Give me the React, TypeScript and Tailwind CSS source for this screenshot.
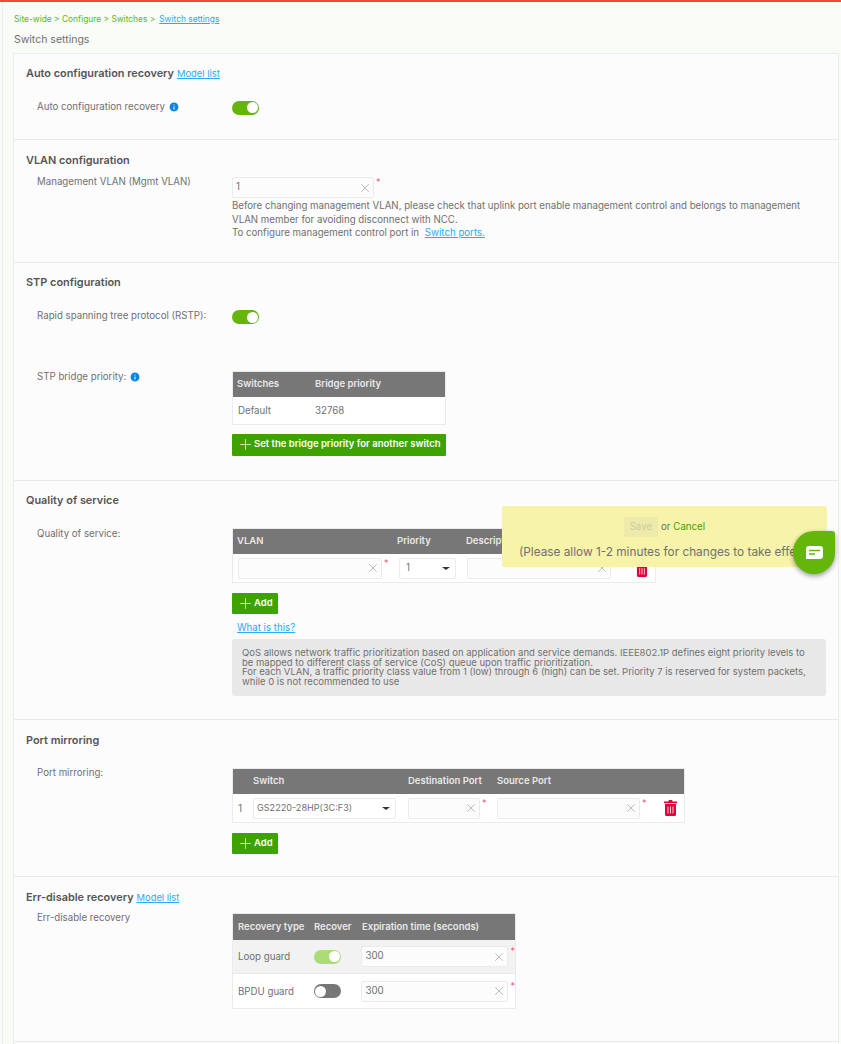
import { Plus, X, Info } from "lucide-react";

const Toggle = ({ on = true, faded = false }: { on?: boolean; faded?: boolean }) => (
  <div
    className={`flex h-[14px] w-[27px] items-center rounded-full px-[1px] ${
      on ? (faded ? "justify-end bg-[#acdc78]" : "justify-end bg-[#64b70a]") : "justify-start bg-[#777777]"
    }`}
  >
    <div className="h-[11px] w-[11px] rounded-full bg-white" />
  </div>
);

const TextInput = ({ value, className, star = true }: { value?: string; className: string; star?: boolean }) => (
  <div className="flex items-start">
    <div
      className={`flex h-[21px] items-center justify-between rounded-[2px] border border-[#ebebeb] bg-[#fcfcfc] pl-[3px] pr-[1px] text-[9.7px] text-[#707070] ${className}`}
    >
      <span>{value}</span>
      <X className="h-[14px] w-[14px] text-[#a0a0a0]" strokeWidth={1.2} />
    </div>
    {star && <span className="ml-[2px] text-[9px] leading-[10px] text-[#f0506e]">*</span>}
  </div>
);

const SelectBox = ({ value, className }: { value: string; className: string }) => (
  <div
    className={`flex h-[21px] items-center justify-between rounded-[2px] border border-[#ebebeb] bg-white pl-[3px] pr-[5px] text-[#707070] ${className}`}
  >
    <span>{value}</span>
    <div className="h-0 w-0 border-x-[4px] border-t-[3px] border-x-transparent border-t-[#333333]" />
  </div>
);

const AddButton = ({ label, className }: { label: string; className: string }) => (
  <div
    className={`flex items-center rounded-[1px] bg-[#3ea300] pl-[5px] text-[9.5px] font-semibold text-white ${className}`}
  >
    <Plus className="h-[17px] w-[17px]" strokeWidth={1} />
    <span>{label}</span>
  </div>
);

const Link = ({ children, className = "" }: { children: React.ReactNode; className?: string }) => (
  <span className={`text-[#29abf5] underline ${className}`}>{children}</span>
);

const Section = ({ className, children }: { className: string; children: React.ReactNode }) => (
  <section className={`relative border-b border-[#e9e9e9] pl-[12px] ${className}`}>{children}</section>
);

const Title = ({ children }: { children: React.ReactNode }) => (
  <h2 className="-mt-[1px] flex items-baseline gap-[3px] text-[10.9px] font-semibold leading-[14px] text-[#555555]">
    {children}
  </h2>
);

const Label = ({ children, className = "" }: { children: React.ReactNode; className?: string }) => (
  <div className={`flex w-[206px] shrink-0 items-center gap-[3px] pl-[11px] text-[9.7px] text-[#707070] ${className}`}>
    {children}
  </div>
);

const InfoDot = () => (
  <Info className="h-[12px] w-[12px] fill-[#0a84e0] text-white" strokeWidth={2.2} />
);

const HeadRow = ({ children, className = "" }: { children: React.ReactNode; className?: string }) => (
  <div className={`flex items-center bg-[#777777] text-[9.5px] font-semibold text-[#e9e9e9] ${className}`}>{children}</div>
);

// filled bin with lid, handle and three white slots
const TrashIcon = ({ className }: { className: string }) => (
  <svg viewBox="0 0 13 16" className={className}>
    <path d="M4.5 1.6V1a1 1 0 0 1 1-1h2a1 1 0 0 1 1 1v.6H13v1.6H0V1.6z" fill="#e2003c" />
    <path d="M1 4h11v10.5a1.5 1.5 0 0 1-1.5 1.5h-8A1.5 1.5 0 0 1 1 14.5z" fill="#e2003c" />
    <path d="M4 6.5v7M6.5 6.5v7M9 6.5v7" stroke="#fff" strokeWidth="0.8" />
  </svg>
);

export default function App() {
  return (
    <div className="relative h-[1044px] w-[841px] overflow-hidden bg-[#f8fbf6] font-['Inter',sans-serif]">
      <div className="h-[2px] bg-[#f0483e]" />
      <div className="ml-[2px] h-[1042px] border-l border-[#eeeeee] pl-[10px] pr-[2px]">
        {/* breadcrumb */}
        <div className="flex h-[31px] items-center gap-[3px] pl-[1px] pt-[3px] text-[8.4px] text-[#5cb82c]">
          <span>Site-wide &gt; Configure &gt; Switches &gt;</span>
          <span className="ml-[1px] text-[#29abf5] underline">Switch settings</span>
        </div>
        <div className="h-[20px] pl-[1px] text-[10.5px] leading-[14px] text-[#707070]">Switch settings</div>

        <div className="border border-[#ececec] bg-[#fcfcfc]">
          {/* Auto configuration recovery */}
          <Section className="h-[86px] pt-[13px]">
            <Title>
              Auto configuration recovery <Link className="text-[9.4px] font-normal">Model list</Link>
            </Title>
            <div className="mt-[19px] flex items-center">
              <Label className="pb-[1px]">
                Auto configuration recovery <InfoDot />
              </Label>
              <Toggle />
            </div>
          </Section>

          {/* VLAN configuration */}
          <Section className="h-[123px] pt-[14px]">
            <Title>VLAN configuration</Title>
            <div className="mt-[10px] flex items-start">
              <Label className="-mt-[2px]">Management VLAN (Mgmt VLAN)</Label>
              <div>
                <TextInput value="1" className="w-[142px]" />
                <p className="mt-[1px] w-[590px] text-[9.7px] leading-[13.5px] text-[#707070]">
                  Before changing management VLAN, please check that uplink port enable management control and belongs to management VLAN member for avoiding disconnect with NCC.
                  <br />
                  To configure management control port in <Link className="ml-[3px]">Switch ports.</Link>
                </p>
              </div>
            </div>
          </Section>

          {/* STP configuration */}
          <Section className="h-[218px] pt-[13px]">
            <Title>STP configuration</Title>
            <div className="mt-[20px] flex items-center">
              <Label className="pb-[2px]">Rapid spanning tree protocol (RSTP):</Label>
              <Toggle />
            </div>
            <div className="mt-[45px] flex items-start">
              <Label className="-mt-[1px]">
                STP bridge priority: <InfoDot />
              </Label>
              <div>
                <div className="w-[214px] border border-[#ebebeb] bg-white">
                  <HeadRow className="h-[25px] pl-[4px]">
                    <span className="w-[78px]">Switches</span>
                    <span>Bridge priority</span>
                  </HeadRow>
                  <div className="flex h-[27px] items-center pl-[5px] pt-[2px] text-[9.7px] text-[#707070]">
                    <span className="w-[77px]">Default</span>
                    <span>32768</span>
                  </div>
                </div>
                <AddButton label="Set the bridge priority for another switch" className="mt-[9px] h-[22px] w-[214px]" />
              </div>
            </div>
          </Section>

          {/* Quality of service */}
          <Section className="h-[239px] pt-[13px]">
            <Title>Quality of service</Title>
            <div className="mt-[21px] flex items-start">
              <Label className="-mt-[1px]">Quality of service:</Label>
              <div>
                <div className="w-[424px] border border-[#ebebeb] bg-white">
                  <HeadRow className="h-[25px] pl-[4px]">
                    <span className="w-[160px]">VLAN</span>
                    <span className="w-[69px]">Priority</span>
                    <span>Description</span>
                  </HeadRow>
                  <div className="flex h-[28px] items-center pl-[5px]">
                    <div className="w-[161px]">
                      <TextInput className="w-[144px]" />
                    </div>
                    <SelectBox value="1" className="w-[57px] pl-[6px] text-[9.7px]" />
                    <div className="ml-[11px]">
                      <TextInput className="w-[144px]" star={false} />
                    </div>
                    <TrashIcon className="ml-[25px] mt-[2px] h-[15px] w-[12px]" />
                  </div>
                </div>
                <AddButton label="Add" className="mt-[10px] h-[21px] w-[46px]" />
                <Link className="mt-[8px] block pl-[5px] text-[9.7px] leading-[12px]">What is this?</Link>
                <div className="mt-[5px] h-[57px] w-[594px] rounded-[3px] bg-[#e8e8e8] px-[10px] pt-[9px] text-[9.5px] leading-[9.5px] text-[#707070]">
                  QoS allows network traffic prioritization based on application and service demands. IEEE802.1P defines eight priority levels to be mapped to different class of service (CoS) queue upon traffic prioritization.
                  <br />
                  For each VLAN, a traffic priority class value from 1 (low) through 6 (high) can be set. Priority 7 is reserved for system packets, while 0 is not recommended to use
                </div>
              </div>
            </div>
          </Section>

          {/* Port mirroring */}
          <Section className="h-[157px] pt-[14px]">
            <Title>Port mirroring</Title>
            <div className="mt-[21px] flex items-start">
              <Label className="-mt-[2px]">Port mirroring:</Label>
              <div>
                <div className="w-[453px] border border-[#ebebeb] bg-white">
                  <HeadRow className="h-[25px] pl-[20px]">
                    <span className="w-[155px]">Switch</span>
                    <span className="w-[89px]">Destination Port</span>
                    <span>Source Port</span>
                  </HeadRow>
                  <div className="flex h-[28px] items-center pl-[5px]">
                    <span className="w-[15px] text-[10px] text-[#707070]">1</span>
                    <SelectBox value="GS2220-28HP(3C:F3)" className="w-[143px] text-[9.1px]" />
                    <div className="ml-[12px] w-[89px]">
                      <TextInput className="w-[72px]" />
                    </div>
                    <TextInput className="w-[143px]" />
                    <TrashIcon className="ml-[17px] h-[16px] w-[13px]" />
                  </div>
                </div>
                <AddButton label="Add" className="mt-[10px] h-[21px] w-[46px]" />
              </div>
            </div>
          </Section>

          {/* Err-disable recovery */}
          <Section className="h-[165px] pt-[14px]">
            <Title>
              Err-disable recovery <Link className="text-[9.4px] font-normal">Model list</Link>
            </Title>
            <div className="mt-[8px] flex items-start">
              <Label className="-mt-[2px]">Err-disable recovery</Label>
              <div className="w-[284px] border border-[#ebebeb] bg-white">
                <HeadRow className="h-[26px] pl-[5px]">
                  <span className="w-[76px]">Recovery type</span>
                  <span className="w-[48px]">Recover</span>
                  <span>Expiration time (seconds)</span>
                </HeadRow>
                <div className="flex h-[34px] items-center border-b border-[#ebebeb] bg-[#f2f2f2] pl-[5px] text-[9.7px] text-[#707070]">
                  <span className="w-[76px] pt-[2px]">Loop guard</span>
                  <div className="ml-[2px] w-[48px]">
                    <Toggle faded />
                  </div>
                  <TextInput value="300" className="w-[147px]" />
                </div>
                <div className="flex h-[34px] items-center pl-[5px] text-[9.7px] text-[#707070]">
                  <span className="w-[76px] pt-[2px]">BPDU guard</span>
                  <div className="ml-[2px] w-[48px]">
                    <Toggle on={false} />
                  </div>
                  <TextInput value="300" className="w-[147px]" />
                </div>
              </div>
            </div>
          </Section>

          <div className="h-[20px]" />
        </div>
      </div>

      {/* floating save bar */}
      <div className="absolute left-[502px] top-[506px] h-[61px] w-[325px] overflow-hidden rounded-[2px] bg-[#f7f3a8] text-center text-[#707070]">
        <div className="mt-[11px] flex items-center justify-center gap-[3px] text-[9.7px]">
          <span className="flex h-[20px] w-[34px] items-center justify-center bg-[#eeeaa9] text-[#cfcca0]">Save</span>
          <span>or</span>
          <span className="text-[#3ea300]">Cancel</span>
        </div>
        <div className="mt-[7px] whitespace-nowrap pl-[17px] text-left text-[11.8px]">(Please allow 1-2 minutes for changes to take effect)</div>
      </div>

      {/* chat bubble */}
      <div className="absolute left-[793px] top-[531px] flex h-[43px] w-[42px] items-center justify-center rounded-[21px] rounded-tr-[3px] bg-[#64b70a] shadow-[0_2px_5px_rgba(0,0,0,0.4)]">
        <svg width="17" height="13" viewBox="0 0 17 13">
          <path d="M3 0h11a3 3 0 0 1 3 3v7a3 3 0 0 1-3 3H0V3a3 3 0 0 1 3-3z" fill="#fff" />
          <path d="M3 4.5h11M3 8h6" stroke="#64b70a" strokeWidth="1.4" />
        </svg>
      </div>
    </div>
  );
}
